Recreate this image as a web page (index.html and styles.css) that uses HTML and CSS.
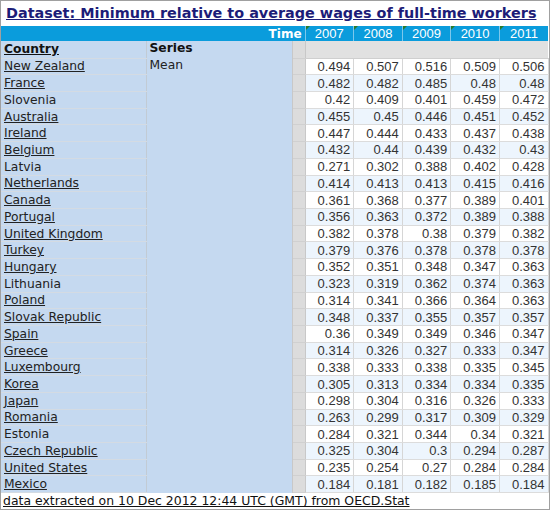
FILE: index.html
```html
<!DOCTYPE html>
<html lang="en">
<head>
  <meta charset="UTF-8">
  <title>Dataset: Minimum relative to average wages of full-time workers</title>
  <link rel="stylesheet" href="styles.css">
</head>
<body>

<div class="frame">
  <h1><a href="#">Dataset: Minimum relative to average wages of full-time workers</a></h1>

  <table class="data">
    <colgroup>
      <col class="c-country">
      <col class="c-series">
      <col class="c-gap">
      <col class="c-year"><col class="c-year"><col class="c-year"><col class="c-year"><col class="c-year">
    </colgroup>
    <tr class="time-row">
      <th colspan="3" class="time">Time</th>
      <th class="year">2007</th>
      <th class="year">2008</th>
      <th class="year">2009</th>
      <th class="year">2010</th>
      <th class="year">2011</th>
    </tr>
    <tr class="dim-row">
      <th class="country"><a href="#">Country</a></th>
      <th class="series">Series</th>
      <td class="gap"></td>
      <td class="blank" colspan="5"></td>
    </tr>
    <tbody id="rows"></tbody>
  </table>

  <div class="footer"><a href="#">data extracted on 10 Dec 2012 12:44 UTC (GMT) from OECD.Stat</a></div>
</div>

<script src="script.js"></script>
</body>
</html>
```

FILE: script.js
```js
const data = [
  ["New Zealand", true, 0.494, 0.507, 0.516, 0.509, 0.506],
  ["France", true, 0.482, 0.482, 0.485, 0.48, 0.48],
  ["Slovenia", false, 0.42, 0.409, 0.401, 0.459, 0.472],
  ["Australia", true, 0.455, 0.45, 0.446, 0.451, 0.452],
  ["Ireland", true, 0.447, 0.444, 0.433, 0.437, 0.438],
  ["Belgium", true, 0.432, 0.44, 0.439, 0.432, 0.43],
  ["Latvia", false, 0.271, 0.302, 0.388, 0.402, 0.428],
  ["Netherlands", true, 0.414, 0.413, 0.413, 0.415, 0.416],
  ["Canada", true, 0.361, 0.368, 0.377, 0.389, 0.401],
  ["Portugal", true, 0.356, 0.363, 0.372, 0.389, 0.388],
  ["United Kingdom", true, 0.382, 0.378, 0.38, 0.379, 0.382],
  ["Turkey", true, 0.379, 0.376, 0.378, 0.378, 0.378],
  ["Hungary", true, 0.352, 0.351, 0.348, 0.347, 0.363],
  ["Lithuania", false, 0.323, 0.319, 0.362, 0.374, 0.363],
  ["Poland", true, 0.314, 0.341, 0.366, 0.364, 0.363],
  ["Slovak Republic", true, 0.348, 0.337, 0.355, 0.357, 0.357],
  ["Spain", true, 0.36, 0.349, 0.349, 0.346, 0.347],
  ["Greece", true, 0.314, 0.326, 0.327, 0.333, 0.347],
  ["Luxembourg", true, 0.338, 0.333, 0.338, 0.335, 0.345],
  ["Korea", true, 0.305, 0.313, 0.334, 0.334, 0.335],
  ["Japan", true, 0.298, 0.304, 0.316, 0.326, 0.333],
  ["Romania", true, 0.263, 0.299, 0.317, 0.309, 0.329],
  ["Estonia", false, 0.284, 0.321, 0.344, 0.34, 0.321],
  ["Czech Republic", true, 0.325, 0.304, 0.3, 0.294, 0.287],
  ["United States", true, 0.235, 0.254, 0.27, 0.284, 0.284],
  ["Mexico", true, 0.184, 0.181, 0.182, 0.185, 0.184]
];

const body = document.getElementById('rows');

data.forEach((row, i) => {
  const tr = document.createElement('tr');
  tr.className = i % 2 ? 'odd' : 'even';

  const name = row[1] ? '<a href="#">' + row[0] + '</a>' : row[0];
  let html = '<td class="country">' + name + '</td>';
  if (i === 0) {
    html += '<td class="series" rowspan="' + data.length + '">Mean</td>';
  }
  html += '<td class="gap"></td>';
  for (let k = 2; k < row.length; k++) {
    html += '<td class="num">' + row[k] + '</td>';
  }
  tr.innerHTML = html;
  body.appendChild(tr);
});
```

FILE: styles.css
```css
body {
  margin: 0;
  background: #ffffff;
}
.frame {
  width: 548px;
  height: 508px;
  border: 1px solid #a0a0a0;
  overflow: hidden;
}
h1 {
  margin: 0;
  height: 25px;
  padding-left: 5px;
  font-family: "DejaVu Sans", Verdana, sans-serif;
  font-size: 14.4px;
  line-height: 24px;
  font-weight: bold;
  white-space: nowrap;
}
h1 a {
  color: #1c1c78;
}
.data {
  border-collapse: collapse;
  table-layout: fixed;
  width: 547px;
  font-size: 12px;
}
.c-country { width: 145px; }
.c-series { width: 146px; }
.c-gap { width: 13px; }
.c-year { width: 48.6px; }
.data th,
.data td {
  padding: 0 3px;
  white-space: nowrap;
  overflow: hidden;
}
.time-row {
  height: 15px;
}
.time-row th {
  background: #0a9cdc;
  color: #ffffff;
  font-weight: normal;
  border-left: 1px solid #7cc8ec;
}
.time-row .time {
  text-align: right;
  border-left: none;
  font-family: "DejaVu Sans", Verdana, sans-serif;
  font-weight: bold;
  font-size: 12px;
}
.year {
  position: relative;
  font-family: "Liberation Sans", Arial, sans-serif;
  font-size: 13px;
  text-align: center;
}
.year::before {
  content: "";
  position: absolute;
  left: 0;
  top: 0;
  border-top: 4px solid #2a7a2a;
  border-right: 4px solid transparent;
}
.dim-row {
  height: 17px;
}
.country,
.series {
  background: #c5d9f0;
  color: #222222;
  font-family: "DejaVu Sans", Verdana, sans-serif;
  font-size: 12.3px;
  text-align: left;
}
.series {
  vertical-align: top;
}
th.country,
th.series {
  font-weight: bold;
  color: #111111;
}
.country {
  border-bottom: 1px solid #d4dbe3;
  border-right: 1px solid #c2cbd4;
}
.country a {
  color: #222222;
}
th.country a {
  color: #111111;
}
.series {
  border-right: 1px solid #c8c8c8;
}
.gap {
  background: #dcdcdc;
  border-right: 1px solid #c8c8c8;
  border-bottom: 1px solid #d0d0d0;
}
.blank {
  background: #e1e1e1;
  border-left: 1px solid #cfcfcf;
  border-bottom: 1px solid #cfcfcf;
}
#rows tr {
  height: 16.73px;
}
.num {
  text-align: right;
  font-family: "Liberation Sans", Arial, sans-serif;
  font-size: 13px;
  color: #333333;
  border-right: 1px solid #d6d6d6;
  border-bottom: 1px solid #dcdcdc;
}
.even .num {
  background: #ffffff;
}
.odd .num {
  background: #edf5fd;
}
.footer {
  padding-left: 2px;
  height: 15px;
  font-family: "DejaVu Sans", Verdana, sans-serif;
  font-size: 12.45px;
  line-height: 15px;
  white-space: nowrap;
}
.footer a {
  color: #111111;
}
```
